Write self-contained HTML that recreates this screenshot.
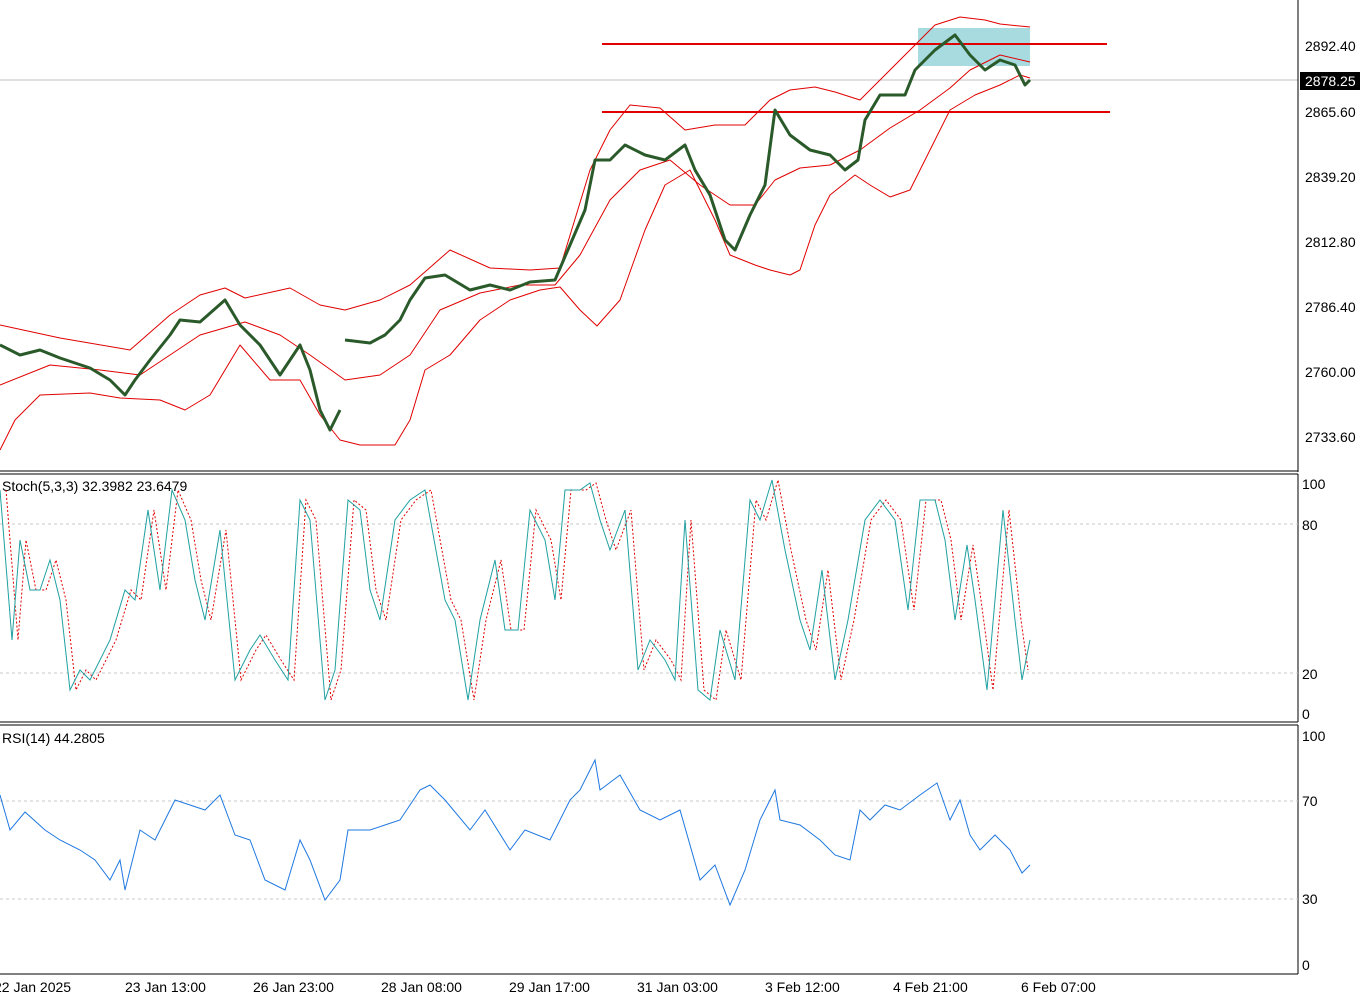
<!DOCTYPE html>
<html><head><meta charset="utf-8"><style>
html,body{margin:0;padding:0;background:#fff;width:1365px;height:997px;overflow:hidden}
svg{display:block;font-family:"Liberation Sans",sans-serif;font-size:14px}
</style></head><body>
<svg width="1365" height="997" viewBox="0 0 1365 997">
<rect width="1365" height="997" fill="#fff"/>
<line x1="0" y1="80" x2="1298" y2="80" stroke="#c0c0c0"/>
<rect x="918" y="28" width="112" height="38" fill="#a8dbe0"/>
<line x1="602" y1="44" x2="1107" y2="44" stroke="#e00000" stroke-width="2"/>
<line x1="602" y1="112" x2="1110" y2="112" stroke="#e00000" stroke-width="2"/>
<g fill="none" stroke="#e00000" stroke-width="1" stroke-linejoin="round">
<polyline points="0,325 60,338 130,350 170,315 200,295 225,288 245,298 290,288 320,305 345,310 380,300 410,285 450,250 490,268 530,270 560,268 590,170 610,130 630,105 660,108 685,130 715,125 745,125 770,100 790,90 815,87 835,92 860,100 885,75 910,50 935,25 960,17 985,20 1000,24 1030,27"/>
<polyline points="0,385 50,365 100,370 140,375 170,355 200,335 245,322 280,335 310,355 345,380 380,375 410,355 440,310 480,293 520,285 555,285 580,255 610,200 640,170 670,160 700,185 730,205 755,205 775,180 800,168 830,165 860,150 890,128 920,110 950,88 970,70 1000,55 1030,62"/>
<polyline points="0,450 15,420 40,395 90,393 120,398 160,400 185,410 210,395 240,345 270,380 300,380 320,415 340,440 360,445 395,445 410,420 425,370 450,355 480,320 510,300 540,290 560,287 580,310 597,326 620,300 645,230 665,185 690,170 715,220 730,255 755,265 770,270 790,275 800,270 815,225 830,195 855,175 870,185 890,197 910,190 930,150 950,110 975,95 1000,85 1020,75 1030,78"/>
</g>
<g fill="none" stroke-linejoin="round" stroke="#2a5a2a" stroke-width="3">
<polyline points="0,345 20,355 40,350 60,358 90,368 110,380 125,395 135,380 150,360 170,335 180,320 200,322 225,300 240,325 260,345 280,375 300,345 310,370 320,410 330,430 340,410"/>
<polyline points="345,340 370,343 385,335 400,320 410,300 425,278 445,275 470,290 490,285 510,290 530,282 555,280 570,245 585,210 595,160 610,160 625,145 645,155 665,160 685,145 695,170 710,195 725,240 735,250 750,215 765,185 775,110 790,135 810,150 830,155 845,170 858,160 865,120 880,95 905,95 915,70 935,50 955,35 970,55 985,70 1000,60 1015,65 1025,85 1030,80"/>
</g>
<line x1="1298" y1="0" x2="1298" y2="472" stroke="#000"/>
<line x1="0" y1="471" x2="1298" y2="471" stroke="#000"/>
<g fill="#000">
<text x="1305" y="51">2892.40</text>
<text x="1305" y="117">2865.60</text>
<text x="1305" y="182">2839.20</text>
<text x="1305" y="247">2812.80</text>
<text x="1305" y="312">2786.40</text>
<text x="1305" y="377">2760.00</text>
<text x="1305" y="442">2733.60</text>
</g>
<rect x="1300" y="72" width="60" height="18" fill="#000"/>
<text x="1305" y="86" fill="#fff">2878.25</text>
<line x1="0" y1="474" x2="1298" y2="474" stroke="#000"/>
<line x1="0" y1="722" x2="1298" y2="722" stroke="#000"/>
<line x1="1298" y1="474" x2="1298" y2="722" stroke="#000"/>
<line x1="0" y1="524" x2="1298" y2="524" stroke="#c8c8c8" stroke-dasharray="3 3"/>
<line x1="0" y1="673" x2="1298" y2="673" stroke="#c8c8c8" stroke-dasharray="3 3"/>
<text x="2" y="491">Stoch(5,3,3) 32.3982 23.6479</text>
<g fill="#000"><text x="1302" y="489">100</text><text x="1302" y="530">80</text><text x="1302" y="679">20</text><text x="1302" y="719">0</text></g>
<g fill="none">
<polyline stroke="#e00000" stroke-dasharray="2 2" transform="translate(6,0)" points="0,490 12,640 20,540 30,590 40,590 50,560 60,600 70,690 80,670 90,680 110,640 125,590 135,600 148,510 160,590 172,490 185,520 195,580 205,620 220,530 235,680 250,650 260,635 275,660 288,680 300,500 310,520 325,700 335,670 348,500 360,510 370,590 380,620 395,520 410,500 425,490 445,600 455,620 468,700 480,620 495,560 505,630 518,630 530,510 545,540 555,600 565,490 580,490 590,483 600,520 610,550 625,510 638,670 650,640 665,660 675,680 685,520 698,690 710,700 720,630 735,680 750,500 760,520 772,480 785,550 800,620 810,650 822,570 835,680 848,620 865,520 880,500 895,520 908,610 920,500 935,500 945,540 955,620 967,545 975,600 987,690 1003,510 1015,620 1022,670"/>
<polyline stroke="#20a0a0" points="0,490 12,640 20,540 30,590 40,590 50,560 60,600 70,690 80,670 90,680 110,640 125,590 135,600 148,510 160,590 172,490 185,520 195,580 205,620 220,530 235,680 250,650 260,635 275,660 288,680 300,500 310,520 325,700 335,670 348,500 360,510 370,590 380,620 395,520 410,500 425,490 445,600 455,620 468,700 480,620 495,560 505,630 518,630 530,510 545,540 555,600 565,490 580,490 590,483 600,520 610,550 625,510 638,670 650,640 665,660 675,680 685,520 698,690 710,700 720,630 735,680 750,500 760,520 772,480 785,550 800,620 810,650 822,570 835,680 848,620 865,520 880,500 895,520 908,610 920,500 935,500 945,540 955,620 967,545 975,600 987,690 1003,510 1015,620 1022,680 1030,640"/>
</g>
<line x1="0" y1="725" x2="1298" y2="725" stroke="#000"/>
<line x1="0" y1="974" x2="1298" y2="974" stroke="#000"/>
<line x1="1298" y1="725" x2="1298" y2="974" stroke="#000"/>
<line x1="0" y1="801" x2="1298" y2="801" stroke="#c8c8c8" stroke-dasharray="3 3"/>
<line x1="0" y1="899" x2="1298" y2="899" stroke="#c8c8c8" stroke-dasharray="3 3"/>
<text x="2" y="743">RSI(14) 44.2805</text>
<g fill="#000"><text x="1302" y="741">100</text><text x="1302" y="806">70</text><text x="1302" y="904">30</text><text x="1302" y="970">0</text></g>
<polyline fill="none" stroke="#1e78e0" points="0,795 10,830 25,812 45,830 60,840 80,850 95,860 110,880 120,860 125,890 140,830 155,840 175,800 190,805 205,810 220,795 235,835 250,840 265,880 285,890 300,840 310,860 325,900 340,880 348,830 370,830 400,820 420,790 430,785 445,800 470,830 485,810 510,850 525,830 550,840 570,800 580,790 595,760 600,790 620,775 640,810 660,820 680,810 700,880 715,865 730,905 745,870 760,820 775,790 780,820 800,825 820,840 835,855 850,860 860,810 870,820 885,805 900,810 920,795 937,783 950,820 960,800 970,835 980,850 995,835 1010,850 1022,873 1030,865"/>
<g fill="#000">
<text x="-6" y="992">22 Jan 2025</text>
<text x="125" y="992">23 Jan 13:00</text>
<text x="253" y="992">26 Jan 23:00</text>
<text x="381" y="992">28 Jan 08:00</text>
<text x="509" y="992">29 Jan 17:00</text>
<text x="637" y="992">31 Jan 03:00</text>
<text x="765" y="992">3 Feb 12:00</text>
<text x="893" y="992">4 Feb 21:00</text>
<text x="1021" y="992">6 Feb 07:00</text>
</g>
</svg>
</body></html>
